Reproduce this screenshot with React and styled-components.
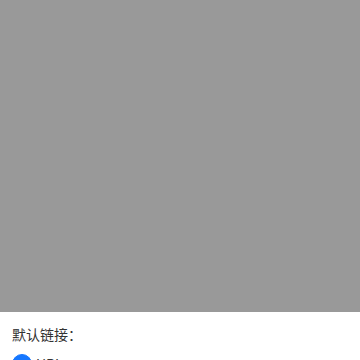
import styled, { createGlobalStyle } from 'styled-components';

/* ---------------------------------- style --------------------------------- */
const GlobalStyle = createGlobalStyle`
  html, body {
    margin: 0;
    padding: 0;
    background: #fff;
    font-family: 'Noto Sans CJK SC', 'Noto Sans', sans-serif;
  }
`;

const Mask = styled.div`
  position: fixed;
  inset: 0;
  background: rgba(0, 0, 0, 0.4);
  display: flex;
  flex-direction: column;
  justify-content: flex-start;
  padding-top: 312px;
  overflow: hidden;
`;

const Sheet = styled.div`
  background: #fff;
  padding: 12px 12px 24px;
  min-height: 240px;
`;

const Title = styled.div`
  font-size: 14px;
  line-height: 20px;
  color: #333;
`;

const Options = styled.div`
  display: flex;
  flex-direction: column;
  gap: 12px;
  margin-top: 10px;
`;

const Option = styled.label`
  display: flex;
  align-items: center;
  gap: 4px;
  font-size: 14px;
  line-height: 20px;
  color: #333;
`;

const Dot = styled.span`
  width: 20px;
  height: 20px;
  border-radius: 50%;
  box-sizing: border-box;
  border: 1px solid ${(p) => (p.checked ? '#1677ff' : '#ccc')};
  background: ${(p) => (p.checked ? '#1677ff' : '#fff')};
  flex-shrink: 0;
`;

/* -------------------------------- component ------------------------------- */
export default function App() {
  const options = [
    { key: 'url', label: 'URL', checked: true },
    { key: 'page', label: '页面', checked: false },
  ];
  return (
    <>
      <GlobalStyle />
      <Mask>
        <Sheet>
          <Title>默认链接：</Title>
          <Options>
            {options.map((o) => (
              <Option key={o.key}>
                <Dot checked={o.checked} />
                {o.label}
              </Option>
            ))}
          </Options>
        </Sheet>
      </Mask>
    </>
  );
}
